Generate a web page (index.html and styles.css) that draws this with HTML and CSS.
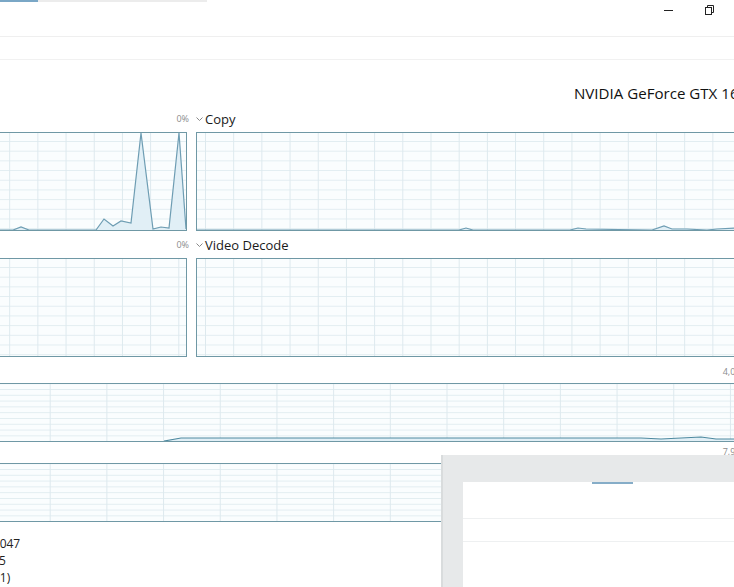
FILE: index.html
```html
<!DOCTYPE html>
<html lang="en">
<head>
<meta charset="utf-8">
<title>Task Manager - GPU</title>
<link rel="stylesheet" href="styles.css">
</head>
<body>
<div class="window">
  <header class="titlebar">
    <div class="tabline"><span class="tabline-active"></span></div>
    <div class="controls">
      <span class="ctl"><svg width="10" height="10" viewBox="0 0 10 10"><line x1="0" y1="5.5" x2="9" y2="5.5" stroke="#222" stroke-width="1"/></svg></span>
      <span class="ctl"><svg width="10" height="10" viewBox="0 0 10 10"><rect x="0.5" y="2.5" width="6" height="7" fill="none" stroke="#222" stroke-width="1"/><polyline points="2.5,2.5 2.5,0.5 8.5,0.5 8.5,7.5 6.5,7.5" fill="none" stroke="#222" stroke-width="1"/></svg></span>
      <span class="ctl"></span>
    </div>
  </header>
  <div class="toolbar"></div>

  <main class="content">
    <h1 class="gpu-name">NVIDIA GeForce GTX 1650</h1>

    <div class="engines">
      <section class="engine">
        <div class="engine-head engine-head-end"><span class="pct">0%</span></div>
        <div class="graph graph-left">
          <svg viewBox="0 0 205 97" preserveAspectRatio="none">
            <polygon class="area" points="0,97 32,97 40,94 48,97 115,97 123,86 132,93 140,88 150,90 160,0 172,96 180,94 188,95 198,0 205,96 205,97"/>
            <polyline class="line" points="0,97 32,97 40,94 48,97 115,97 123,86 132,93 140,88 150,90 160,0 172,96 180,94 188,95 198,0 205,96"/>
          </svg>
        </div>
      </section>
      <section class="engine">
        <div class="engine-head">
          <span class="chev"><svg width="7" height="5" viewBox="0 0 7 5"><polyline points="0.5,0.5 3.5,3.5 6.5,0.5" fill="none" stroke="#888" stroke-width="1"/></svg></span>
          <span class="name">Copy</span>
        </div>
        <div class="graph graph-right">
          <svg viewBox="0 0 562 97" preserveAspectRatio="none">
            <polygon class="area" points="0,97 262,97 269,95 276,97 373,97 381,95 389,96 455,97 467,93 475,96 490,96 510,97 520,96 538,95 562,95 562,97"/>
            <polyline class="line" points="0,97 262,97 269,95 276,97 373,97 381,95 389,96 455,97 467,93 475,96 490,96 510,97 520,96 538,95 562,95"/>
          </svg>
        </div>
      </section>

      <section class="engine">
        <div class="engine-head engine-head-end"><span class="pct">0%</span></div>
        <div class="graph graph-left"></div>
      </section>
      <section class="engine">
        <div class="engine-head">
          <span class="chev"><svg width="7" height="5" viewBox="0 0 7 5"><polyline points="0.5,0.5 3.5,3.5 6.5,0.5" fill="none" stroke="#888" stroke-width="1"/></svg></span>
          <span class="name">Video Decode</span>
        </div>
        <div class="graph graph-right"></div>
      </section>
    </div>

    <section class="memory">
      <div class="mem-head mem-head-first"><span class="pct">4,0 GB</span></div>
      <div class="graph graph-wide">
        <svg viewBox="0 0 778 57" preserveAspectRatio="none">
          <polygon class="area" points="0,57 183,57 200,54 660,54 680,55 700,54 720,53 735,55 778,55 778,57"/>
          <polyline class="line line-dark" points="183,57 200,54 660,54 680,55 700,54 720,53 735,55 778,55"/>
        </svg>
      </div>
    </section>

    <section class="memory">
      <div class="mem-head"><span class="pct">7,9 GB</span></div>
      <div class="graph graph-wide"></div>
    </section>

    <div class="details">
      <div class="detail">31.0.15.3047</div>
      <div class="detail">2023/1/25</div>
      <div class="detail detail-dx">12 (FL 12.1)</div>
    </div>
  </main>

  <div class="popup">
    <div class="popup-panel">
      <span class="popup-accent"></span>
      <div class="popup-row popup-row-first"></div>
      <div class="popup-row popup-row-second"></div>
    </div>
  </div>
</div>
</body>
</html>
```

FILE: styles.css
```css
html, body {
  margin: 0;
  padding: 0;
}

body {
  width: 734px;
  height: 587px;
  overflow: hidden;
  background: #ffffff;
  font-family: "Open Sans", "Noto Sans", sans-serif;
  color: #1b1b1b;
}

.window {
  position: relative;
  width: 734px;
  height: 587px;
  overflow: hidden;
}

/* title bar */
.titlebar {
  box-sizing: border-box;
  height: 37px;
  display: flex;
  align-items: flex-start;
  border-bottom: 1px solid #efefef;
}

.tabline {
  flex-shrink: 0;
  width: 207px;
  height: 2px;
  background: #ececec;
  display: flex;
}

.tabline-active {
  width: 38px;
  height: 2px;
  background: #7aa7c6;
}

.controls {
  flex-shrink: 0;
  margin-left: 441px;
  display: flex;
}

.ctl {
  flex-shrink: 0;
  width: 41px;
  height: 20px;
  display: flex;
  align-items: center;
  justify-content: center;
}

.ctl svg {
  display: block;
}

.toolbar {
  box-sizing: border-box;
  height: 23px;
  border-bottom: 1px solid #f1f1f1;
}

/* content */
.content {
  display: flex;
  flex-direction: column;
}

.gpu-name {
  margin: 23px 0 5px 574px;
  font-size: 15.1px;
  line-height: 20px;
  font-weight: 400;
  white-space: nowrap;
  color: #111;
}

.engines {
  display: grid;
  grid-template-columns: 207px 564px;
  column-gap: 9px;
  row-gap: 3px;
  margin-left: -20px;
  width: 780px;
}

.engine {
  display: flex;
  flex-direction: column;
}

.engine-head {
  height: 24px;
  display: flex;
  align-items: flex-end;
  box-sizing: border-box;
  padding-bottom: 5px;
}

.engine-head-end {
  justify-content: flex-end;
  margin-right: -2px;
  padding-bottom: 7px;
}

.pct {
  font-size: 9px;
  line-height: 12px;
  color: #8c8c8c;
  white-space: nowrap;
}

.chev {
  width: 7px;
  height: 16px;
  display: flex;
  align-items: center;
  margin-right: 2px;
}

.chev svg {
  display: block;
}

.name {
  font-size: 13px;
  line-height: 16px;
  color: #1a1a1a;
  white-space: nowrap;
}

/* graphs */
.graph {
  box-sizing: border-box;
  border: 1px solid #6f98a5;
  background-color: #fafdfe;
  background-image:
    linear-gradient(to right, #dde9ee 1px, transparent 1px),
    linear-gradient(to bottom, #e2edf1 1px, transparent 1px);
}

.graph svg {
  display: block;
  width: 100%;
  height: 100%;
}

.graph-left {
  height: 99px;
  background-size: 28.2px 100%, 100% 9.7px;
  background-position: 0px 0, 0 8px;
}

.graph-right {
  height: 99px;
  background-size: 28.2px 100%, 100% 9.7px;
  background-position: 8px 0, 0 8px;
}

.graph-wide {
  height: 59px;
  background-size: 56.7px 100%, 100% 5.8px;
  background-position: 12px 0, 0 5px;
}

.area {
  fill: #e1eff6;
  stroke: none;
}

.line {
  fill: none;
  stroke: #6e9db3;
  stroke-width: 1.2;
  vector-effect: non-scaling-stroke;
}

.line-dark {
  stroke: #4f8aa0;
}

/* memory */
.memory {
  display: flex;
  flex-direction: column;
  margin-left: -20px;
  width: 780px;
}

.mem-head {
  box-sizing: border-box;
  height: 21px;
  display: flex;
  align-items: flex-end;
  justify-content: flex-end;
  padding-right: 10px;
  padding-bottom: 5px;
}

.mem-head-first {
  height: 26px;
}

/* details */
.details {
  margin: 13px 0 0 -51px;
  display: flex;
  flex-direction: column;
}

.detail {
  font-size: 12px;
  line-height: 17px;
  color: #222;
  white-space: nowrap;
}

.detail-dx {
  margin-left: -2px;
}

/* overlapping window */
.popup {
  position: absolute;
  left: 441px;
  top: 455px;
  right: 0;
  bottom: 0;
  background: #e7e9ea;
  border-left: 2px solid #d9dcdd;
  display: flex;
  flex-direction: column;
}

.popup-panel {
  margin: 27px 0 0 20px;
  flex: 1;
  background: #ffffff;
  display: flex;
  flex-direction: column;
}

.popup-accent {
  display: block;
  margin-left: 129px;
  width: 41px;
  height: 2px;
  background: #86adc8;
}

.popup-row {
  border-bottom: 1px solid #eef0f1;
}

.popup-row-first {
  height: 34px;
}

.popup-row-second {
  height: 22px;
}
```
